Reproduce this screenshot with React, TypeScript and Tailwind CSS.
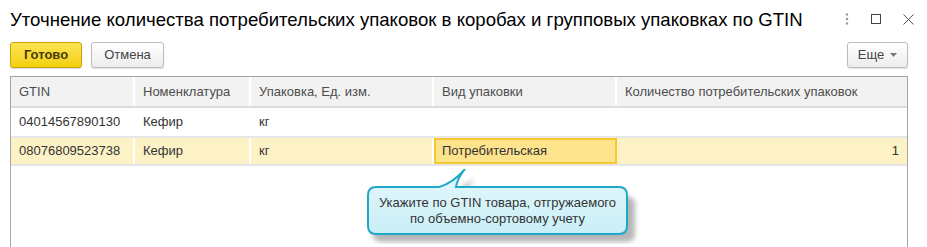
import React from "react";

const cols = ["w-[124px]", "w-[116px]", "w-[183px]", "w-[183px]", "flex-1"];
const headers = ["GTIN", "Номенклатура", "Упаковка, Ед. изм.", "Вид упаковки", "Количество потребительских упаковок"];

function Cell({ i, children, className = "" }: { i: number; children?: React.ReactNode; className?: string }) {
  return (
    <div className={`${cols[i]} shrink-0 h-full flex items-center px-2 whitespace-nowrap ${i < 4 ? "border-r-2" : ""} ${className}`}>
      {children}
    </div>
  );
}

function Tip() {
  return (
    <div className="absolute left-[346px] top-[92px] w-[290px] h-[75px]">
      <svg width="290" height="75" className="absolute left-0 top-0">
        <defs>
          <linearGradient id="tipbg" x1="0" y1="0" x2="0" y2="1">
            <stop offset="0" stopColor="#e6f8fc" />
            <stop offset="1" stopColor="#c9eef7" />
          </linearGradient>
          <filter id="sh" x="-10%" y="-20%" width="130%" height="160%">
            <feGaussianBlur stdDeviation="2.5" />
          </filter>
        </defs>
        <path
          d="M19 22 H84 Q96 16 112 4 Q104 14 102 22 H262 Q272 22 272 31 V60 Q272 68 262 68 H19 Q10 68 10 60 V31 Q10 22 19 22 Z"
          fill="#7a7a7a"
          opacity="0.55"
          filter="url(#sh)"
          transform="translate(6 5)"
        />
        <path
          d="M19 18 H82 Q96 14 108 0 Q100 10 99 18 H262 Q270 18 270 26 V57 Q270 65 262 65 H19 Q11 65 11 57 V26 Q11 18 19 18 Z"
          fill="url(#tipbg)"
          stroke="#1fa9c8"
          strokeWidth="2"
        />
      </svg>
      <div className="absolute left-[11px] top-[26px] w-[259px] text-center text-[13px] leading-[16px] text-[#333] whitespace-nowrap">
        Укажите по GTIN товара, отгружаемого
        <br />
        по объемно-сортовому учету
      </div>
    </div>
  );
}

export default function App() {
  return (
    <div className="w-[927px] h-[247px] overflow-hidden bg-white [font-family:'Liberation_Sans',Arial,sans-serif] text-[#333]">
      <div className="flex items-center h-[38px] pl-[10px] pr-[13px]">
        <h1 className="text-[18.6px] text-black pt-[2px] whitespace-nowrap">
          Уточнение количества потребительских упаковок в коробах и групповых упаковках по GTIN
        </h1>
        <div className="ml-auto flex items-center gap-[22px] text-[#777]">
          <svg width="4" height="12" viewBox="0 0 4 12">
            <circle cx="2" cy="1.5" r="1.2" fill="#999" />
            <circle cx="2" cy="6" r="1.2" fill="#999" />
            <circle cx="2" cy="10.5" r="1.2" fill="#999" />
          </svg>
          <svg width="10" height="10" viewBox="0 0 10 10">
            <rect x="0.5" y="0.5" width="9" height="9" fill="none" stroke="#444" />
          </svg>
          <svg width="11" height="11" viewBox="0 0 11 11">
            <path d="M0.5 0.5 L10.5 10.5 M10.5 0.5 L0.5 10.5" stroke="#555" strokeWidth="1" />
          </svg>
        </div>
      </div>

      <div className="flex items-center pl-[10px] pr-[19px] pt-[4px] h-[30px]">
        <button className="w-[72px] h-[26px] rounded-[3px] border border-[#c9a400] bg-gradient-to-b from-[#fbe550] to-[#f3cf00] text-[13px] font-bold text-[#4a3c00] shadow-[0_1px_1px_rgba(0,0,0,0.15)]">
          Готово
        </button>
        <button className="ml-[9px] w-[73px] h-[26px] rounded-[3px] border border-[#bdbdbd] bg-gradient-to-b from-white to-[#ececec] text-[13px] text-[#444] shadow-[0_1px_1px_rgba(0,0,0,0.12)]">
          Отмена
        </button>
        <button className="ml-auto w-[61px] h-[26px] rounded-[3px] border border-[#bdbdbd] bg-gradient-to-b from-white to-[#ececec] text-[13px] text-[#444] flex items-center justify-center gap-[6px] shadow-[0_1px_1px_rgba(0,0,0,0.12)]">
          Еще
          <svg width="7" height="4" viewBox="0 0 7 4">
            <path d="M0 0 H7 L3.5 4 Z" fill="#777" />
          </svg>
        </button>
      </div>

      <div className="relative ml-[10px] mt-[8px] w-[898px] h-[220px] border border-[#a5a5a5] text-[13px]">
        <div className="flex h-[31px] bg-[#f2f2f2] border-b-2 border-[#dcdcdc] text-[#4d4d4d]">
          {headers.map((h, i) => (
            <Cell key={i} i={i} className="border-white">
              {h}
            </Cell>
          ))}
        </div>
        <div className="flex h-[30px] border-b-2 border-[#e6e6e6]">
          <Cell i={0} className="border-transparent">04014567890130</Cell>
          <Cell i={1} className="border-transparent">Кефир</Cell>
          <Cell i={2} className="border-transparent">кг</Cell>
          <Cell i={3} className="border-transparent" />
          <Cell i={4} />
        </div>
        <div className="flex h-[28px] bg-[#fdf2c6] border-b-2 border-[#e6e6e6]">
          <Cell i={0} className="border-white">08076809523738</Cell>
          <Cell i={1} className="border-white">Кефир</Cell>
          <Cell i={2} className="border-white">кг</Cell>
          <div className="w-[183px] shrink-0 h-full flex items-center px-[6px] bg-[#fde38c] border-2 border-[#f7c730]">
            Потребительская
          </div>
          <Cell i={4} className="justify-end pr-[8px]">1</Cell>
        </div>
        <Tip />
      </div>
    </div>
  );
}
